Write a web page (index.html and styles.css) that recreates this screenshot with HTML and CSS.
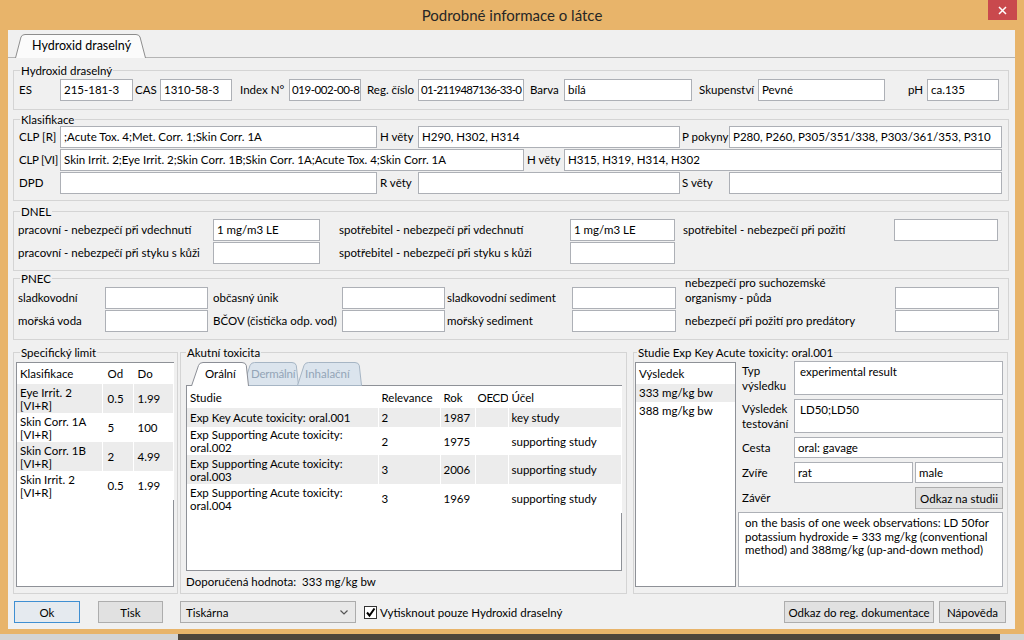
FILE: index.html
```html
<!DOCTYPE html>
<html lang="cs">
<head>
<meta charset="utf-8">
<title>Podrobné informace o látce</title>
<link rel="stylesheet" href="styles.css">
</head>
<body>
<div class="window">
  <div class="titlebar">
    <div></div>
    <div class="title">Podrobné informace o látce</div>
    <div class="close-wrap"><div class="close"><svg width="9" height="9" viewBox="0 0 9 9"><path d="M1 1L8 8M8 1L1 8" stroke="#fff" stroke-width="1.5"/></svg></div></div>
  </div>
  <div class="client">
    <div class="tabstrip">
      <div class="tab main-tab">
        <svg class="tabshape" width="131" height="24" viewBox="0 0 131 24"><path d="M0.5 24 L6 3 Q7 0.5 10 0.5 L121 0.5 Q124 0.5 125 3 L130.5 24" fill="#fbfbfb" stroke="#8d8d8d"/></svg>
        <span class="tablabel">Hydroxid draselný</span>
      </div>
    </div>
    <div class="panel">
      <fieldset class="grp g-id">
        <legend>Hydroxid draselný</legend>
        <div class="row r-id">
          <span class="lb p1">ES</span><div class="inp">215-181-3</div>
          <span class="lb p2">CAS</span><div class="inp">1310-58-3</div>
          <span class="lb p8">Index N°</span><div class="inp num">019-002-00-8</div>
          <span class="lb p6">Reg. číslo</span><div class="inp num num2">01-2119487136-33-0</div>
          <span class="lb p6">Barva</span><div class="inp">bílá</div>
          <span class="lb p7">Skupenství</span><div class="inp">Pevné</div>
          <span class="lb p23">pH</span><div class="inp">ca.135</div>
        </div>
      </fieldset>

      <fieldset class="grp g-klas">
        <legend>Klasifikace</legend>
        <div class="rows">
          <div class="row r-clp1">
            <span class="lb p1">CLP [R]</span><div class="inp">;Acute Tox. 4;Met. Corr. 1;Skin Corr. 1A</div>
            <span class="lb p3">H věty</span><div class="inp">H290, H302, H314</div>
            <span class="lb p2">P pokyny</span><div class="inp">P280, P260, P305/351/338, P303/361/353, P310</div>
          </div>
          <div class="row r-clp2">
            <span class="lb p1 tight">CLP [VI]</span><div class="inp">Skin Irrit. 2;Eye Irrit. 2;Skin Corr. 1B;Skin Corr. 1A;Acute Tox. 4;Skin Corr. 1A</div>
            <span class="lb p3">H věty</span><div class="inp">H315, H319, H314, H302</div>
          </div>
          <div class="row r-clp1">
            <span class="lb p1">DPD</span><div class="inp"></div>
            <span class="lb p3">R věty</span><div class="inp"></div>
            <span class="lb p2">S věty</span><div class="inp"></div>
          </div>
        </div>
      </fieldset>

      <fieldset class="grp g-dnel">
        <legend>DNEL</legend>
        <div class="rows">
          <div class="row r-dnel">
            <span class="lb">pracovní - nebezpečí při vdechnutí</span><div class="inp">1 mg/m3 LE</div>
            <span class="lb p19">spotřebitel - nebezpečí při vdechnutí</span><div class="inp">1 mg/m3 LE</div>
            <span class="lb p8">spotřebitel - nebezpečí při požití</span><div class="inp"></div>
          </div>
          <div class="row r-dnel">
            <span class="lb">pracovní - nebezpečí při styku s kůži</span><div class="inp"></div>
            <span class="lb p19">spotřebitel - nebezpečí při styku s kůži</span><div class="inp"></div>
          </div>
        </div>
      </fieldset>

      <fieldset class="grp g-pnec">
        <legend>PNEC</legend>
        <div class="rows">
          <div class="row r-pnec">
            <span class="lb">sladkovodní</span><div class="inp"></div>
            <span class="lb p5">občasný únik</span><div class="inp"></div>
            <span class="lb p2">sladkovodní sediment</span><div class="inp"></div>
            <span class="lb p9 two">nebezpečí pro suchozemské<br>organismy - půda</span><div class="inp"></div>
          </div>
          <div class="row r-pnec">
            <span class="lb">mořská voda</span><div class="inp"></div>
            <span class="lb p5">BČOV (čistička odp. vod)</span><div class="inp"></div>
            <span class="lb p2">mořský sediment</span><div class="inp"></div>
            <span class="lb p9">nebezpečí při požití pro predátory</span><div class="inp"></div>
          </div>
        </div>
      </fieldset>

      <div class="bottom">
        <fieldset class="grp g-spec">
          <legend>Specifický limit</legend>
          <div class="listbox spec-box">
            <table class="tbl spec">
              <colgroup><col class="cs1"><col class="cs2"><col class="cs3"></colgroup>
              <tr class="hd"><td class="k">Klasifikace</td><td class="o">Od</td><td class="d">Do</td></tr>
              <tr class="alt two-r"><td class="k">Eye Irrit. 2<br>[VI+R]</td><td class="o">0.5</td><td class="d">1.99</td></tr>
              <tr class="two-r"><td class="k">Skin Corr. 1A<br>[VI+R]</td><td class="o">5</td><td class="d">100</td></tr>
              <tr class="alt two-r"><td class="k">Skin Corr. 1B<br>[VI+R]</td><td class="o">2</td><td class="d">4.99</td></tr>
              <tr class="two-r"><td class="k">Skin Irrit. 2<br>[VI+R]</td><td class="o">0.5</td><td class="d">1.99</td></tr>
            </table>
          </div>
        </fieldset>

        <fieldset class="grp g-akut">
          <legend>Akutní toxicita</legend>
          <div class="subtabs">
            <div class="stab active t-oral">
              <svg class="tabshape" width="58" height="24" viewBox="0 0 58 24"><path d="M0.5 24 L7.5 3.5 Q8.5 0.5 12 0.5 L51 0.5 Q54.5 0.5 55.3 3.5 L57.5 24" fill="#ffffff" stroke="#8b8e96"/></svg>
              <span class="stlabel">Orální</span>
            </div>
            <div class="stab t-derm">
              <svg class="tabshape" width="56" height="24" viewBox="0 0 56 24"><path d="M0.5 23.5 L7 3.5 Q8 0.5 11.5 0.5 L49 0.5 Q52.5 0.5 53.3 3.5 L55.5 23.5 Z" fill="#dbe4ed" stroke="#a6b5c4"/></svg>
              <span class="stlabel">Dermální</span>
            </div>
            <div class="stab t-inh">
              <svg class="tabshape" width="65" height="24" viewBox="0 0 65 24"><path d="M0.5 23.5 L7 3.5 Q8 0.5 11.5 0.5 L58 0.5 Q61.5 0.5 62.3 3.5 L64.5 23.5 Z" fill="#dbe4ed" stroke="#a6b5c4"/></svg>
              <span class="stlabel">Inhalační</span>
            </div>
          </div>
          <div class="tabpanel">
            <table class="tbl akut">
              <colgroup><col class="ca1"><col class="ca2"><col class="ca3"><col class="ca4"><col class="ca5"></colgroup>
              <tr class="hd ah"><td>Studie</td><td>Relevance</td><td>Rok</td><td class="tight">OECD</td><td>Účel</td></tr>
              <tr class="alt one-r"><td>Exp Key Acute toxicity: oral.001</td><td>2</td><td>1987</td><td></td><td>key study</td></tr>
              <tr class="r28"><td>Exp Supporting Acute toxicity:<br>oral.002</td><td>2</td><td>1975</td><td></td><td>supporting study</td></tr>
              <tr class="alt two-r"><td>Exp Supporting Acute toxicity:<br>oral.003</td><td>3</td><td>2006</td><td></td><td>supporting study</td></tr>
              <tr class="two-r"><td>Exp Supporting Acute toxicity:<br>oral.004</td><td>3</td><td>1969</td><td></td><td>supporting study</td></tr>
            </table>
          </div>
          <div class="doporucena">Doporučená hodnota:&nbsp; 333 mg/kg bw</div>
        </fieldset>

        <fieldset class="grp g-stud">
          <legend>Studie Exp Key Acute toxicity: oral.001</legend>
          <div class="stud-body">
            <div class="listbox res-list">
              <div class="li li-hd">Výsledek</div>
              <div class="li alt">333 mg/kg bw</div>
              <div class="li">388 mg/kg bw</div>
            </div>
            <div class="stud-form">
              <span class="fl">Typ<br>výsledku</span>
              <div class="inp area span3">experimental result</div>
              <span class="fl">Výsledek<br>testování</span>
              <div class="inp area span3">LD50;LD50</div>
              <span class="fl">Cesta</span>
              <div class="inp span3">oral: gavage</div>
              <span class="fl">Zvíře</span>
              <div class="inp rat">rat</div>
              <div class="inp">male</div>
              <span class="fl">Závěr</span>
              <div class="btn odkaz-studii">Odkaz na studii</div>
              <div class="inp textarea">on the basis of one week observations: LD 50for potassium hydroxide = 333 mg/kg (conventional method) and 388mg/kg (up-and-down method)</div>
            </div>
          </div>
        </fieldset>
      </div>
    </div>
    <div class="footer">
      <div class="btn ok">Ok</div>
      <div class="btn tisk">Tisk</div>
      <div class="select"><span>Tiskárna</span><svg width="8" height="5" viewBox="0 0 8 5"><path d="M0.5 0.5L4 4L7.5 0.5" fill="none" stroke="#555" stroke-width="1.2"/></svg></div>
      <div class="chk"><span class="box"><svg width="11" height="11" viewBox="0 0 11 11"><path d="M2 5.5L4.5 8.5L9.5 1.5" fill="none" stroke="#000" stroke-width="2"/></svg></span><span>Vytisknout pouze Hydroxid draselný</span></div>
      <div class="spacer"></div>
      <div class="btn odkaz">Odkaz do reg. dokumentace</div>
      <div class="btn napoveda">Nápověda</div>
    </div>
  </div>
  <div class="frame-bottom"></div>
  <div class="under"></div>
</div>
</body>
</html>
```
FILE: styles.css
```css
* { box-sizing: border-box; }
html, body { margin: 0; padding: 0; }
body {
  width: 1024px; height: 640px; overflow: hidden;
  font-family: Lato, "Noto Sans", sans-serif;
  font-size: 11.5px; color: #000;
  background: #e8b46a;
}
.window { width: 1024px; height: 640px; display: flex; flex-direction: column; background: #e8b46a; }

/* title bar */
.titlebar { height: 30px; flex: none; display: grid; grid-template-columns: 1fr auto 1fr; align-items: start; }
.title { font-size: 15px; line-height: 30px; color: #262626; }
.close-wrap { display: flex; justify-content: flex-end; padding-right: 7px; }
.close { width: 29px; height: 20px; background: #c9494d; display: flex; align-items: center; justify-content: center; }

/* client */
.client { flex: none; height: 599px; margin: 0 9px 0 8px; background: #f0f0f0; display: flex; flex-direction: column; }
.frame-bottom { height: 5px; flex: none; }
.under { height: 6px; flex: none; background: linear-gradient(to right, #d4d4d4 0 178px, #4e453b 178px 1000px, #d4d4d4 1000px); }

.tabstrip { height: 28px; flex: none; display: flex; align-items: flex-end; padding-left: 7px; border-bottom: 1px solid #b4b4b4; }
.tab { position: relative; z-index: 1; width: 131px; height: 24px; margin-bottom: -1px; }
.tabshape { position: absolute; left: 0; top: 0; }
.tablabel { position: relative; display: block; padding-left: 17px; line-height: 24px; font-size: 12.5px; }

.panel { flex: 1; min-height: 0; display: flex; flex-direction: column; padding: 0 6px 0 5px; }

/* group boxes */
.grp { margin: 0; border: 1px solid #d4d4d4; padding: 0 4px; min-width: 0; }
.grp > legend { padding: 0 1px; margin-left: 2px; line-height: 13px; }

.g-id { margin-top: 6px; padding-bottom: 8px; }
.g-id .row { margin-top: 2px; }
.g-klas { margin-top: 3px; padding-bottom: 6px; }
.g-dnel { margin-top: 4px; padding-bottom: 6px; }
.g-dnel .rows { margin-top: 1px; }
.g-pnec { margin-top: 1px; padding-bottom: 7px; }
.g-pnec .rows { margin-top: 2px; }

.rows { display: flex; flex-direction: column; gap: 1px; }
.row { display: grid; height: 22px; }
.r-id { grid-template-columns: 42px 73px 27px 72px 57px 72px 57px 106px 40px 128px 66px 127px 42px 72px; }
.r-clp1 { grid-template-columns: 42px 317px 41px 262px 49px 273px; }
.r-clp2 { grid-template-columns: 42px 464px 40px 438px; }
.r-dnel { grid-template-columns: 195px 107px 250px 105px 219px 104px; }
.r-pnec { grid-template-columns: 87px 103px 134px 103px 127px 104px 219px 104px; }

.lb { line-height: 22px; white-space: nowrap; }
.lb.two { line-height: 15px; align-self: start; margin-top: -12px; }
.p1 { padding-left: 1px; } .p2 { padding-left: 2px; } .p3 { padding-left: 3px; }
.p5 { padding-left: 5px; } .p6 { padding-left: 6px; } .p7 { padding-left: 7px; }
.p8 { padding-left: 8px; } .p9 { padding-left: 9px; } .p19 { padding-left: 19px; }
.p23 { padding-left: 23px; }
.tight { letter-spacing: -0.3px; }

.inp { height: 22px; border: 1px solid #adb0b6; background: #fff; padding: 0 3px; line-height: 20px; white-space: nowrap; overflow: hidden; }
.inp.num { letter-spacing: -0.45px; padding-left: 2px; }
.inp.num2 { letter-spacing: -0.7px; padding-right: 0; }

/* bottom area */
.bottom { flex: 1; min-height: 0; display: flex; margin-top: 6px; }
.bottom > .grp { display: flex; flex-direction: column; }
.g-spec { width: 165px; padding: 0 3px 6px 2px; }
.g-spec > legend { margin-left: 4px; }
.g-akut { width: 447px; margin-left: 2px; padding: 0 4px 0 5px; }
.g-akut > legend { margin-left: 0; }
.g-stud { width: 375px; margin-left: 6px; padding: 0 4px 6px 1px; }
.g-stud > legend { margin-left: 2px; }

.listbox { background: #fff; border: 1px solid #8e9197; }
.spec-box { flex: 1; margin-top: 3px; }

.tbl { border-collapse: collapse; table-layout: fixed; width: 100%; }
.tbl td { padding: 0 0 0 3px; line-height: 13px; vertical-align: middle; border-right: 1px solid #fff; white-space: nowrap; overflow: hidden; }
.tbl tr.alt td { background: #ececec; }
.tbl tr.hd { height: 21px; }
.tbl tr.ah { height: 22px; }
.tbl tr.one-r { height: 19px; }
.tbl tr.r28 { height: 28px; }
.tbl tr.two-r { height: 29px; }
.tbl td.tight { padding-left: 2px; }
.cs1 { width: 85px; } .cs2 { width: 31px; } .cs3 { width: 40px; }
.spec td.o { padding-left: 5px; }
.spec td.d { padding-left: 4px; }
.ca1 { width: 191px; } .ca2 { width: 62px; } .ca3 { width: 35px; } .ca4 { width: 33px; } .ca5 { width: 113px; }

/* subtabs */
.subtabs { display: flex; height: 23px; margin-top: 3px; padding-left: 5px; flex: none; }
.stab { position: relative; height: 24px; flex: none; }
.stab.active { z-index: 3; }
.t-oral { width: 58px; }
.t-derm { width: 56px; margin-left: -6px; z-index: 1; }
.t-inh { width: 65px; margin-left: -2px; z-index: 2; }
.stlabel { position: relative; display: block; line-height: 23px; }
.t-oral .stlabel { padding-left: 14px; }
.t-derm .stlabel { padding-left: 8px; color: #93a5b7; letter-spacing: -0.2px; }
.t-inh .stlabel { padding-left: 8px; color: #93a5b7; }
.tabpanel { height: 186px; flex: none; background: #fff; border: 1px solid #8e9197; }
.doporucena { margin-top: 4px; line-height: 13px; }

/* studie */
.stud-body { flex: 1; display: flex; margin-top: 2px; min-height: 0; }
.res-list { width: 101px; margin-top: 1px; flex: none; }
.li { height: 18px; line-height: 18px; padding-left: 3px; }
.li-hd { height: 21px; line-height: 21px; }
.li.alt { background: #ececec; }
.stud-form { margin-left: 2px; width: 265px; display: grid; grid-template-columns: 56px 121px 88px; grid-template-rows: 34px 34px 21px 21px 21px 75px; row-gap: 4px; }
.fl { align-self: center; padding-left: 4px; line-height: 15px; }
.span3 { grid-column: 2 / 4; }
.stud-form .inp { height: auto; }
.inp.area { line-height: 13px; padding: 3px 5px; white-space: normal; }
.inp.rat { margin-right: 2px; }
.inp.textarea { grid-column: 1 / 4; white-space: normal; line-height: 13.5px; padding: 3px 6px; }
.odkaz-studii { grid-column: 3; }

/* buttons */
.btn { height: 22px; background: #e1e1e1; border: 1px solid #adadad; display: flex; align-items: center; justify-content: center; white-space: nowrap; }
.footer { height: 35px; flex: none; display: flex; align-items: flex-start; padding: 7px 9px 0 6px; }
.ok { width: 66px; border-color: #3f8fd2; background: #e5eaef; }
.tisk { width: 65px; margin-left: 18px; }
.select { width: 176px; height: 22px; margin-left: 17px; background: #e8e8e8; border: 1px solid #acacac; display: flex; align-items: center; justify-content: space-between; padding: 0 7px 0 5px; }
.chk { display: flex; align-items: center; height: 22px; margin-left: 8px; }
.chk .box { width: 13px; height: 13px; border: 1px solid #333; background: #fff; display: flex; align-items: center; justify-content: center; margin-right: 3px; }
.spacer { flex: 1; }
.odkaz { width: 150px; }
.napoveda { width: 67px; margin-left: 5px; }
```
